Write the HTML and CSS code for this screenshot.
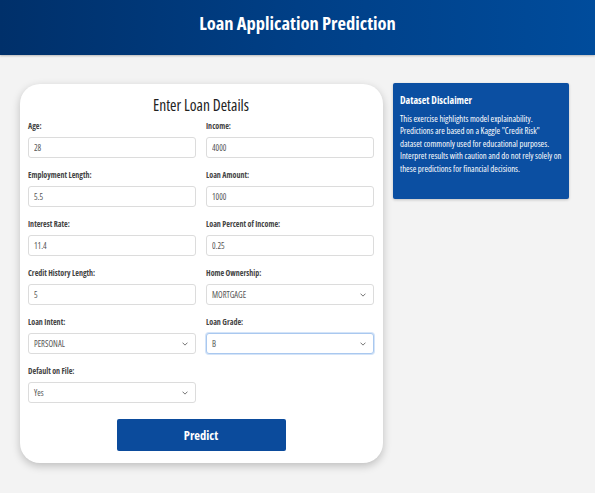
FILE: index.html
```html
<!DOCTYPE html>
<html lang="en">
<head>
<meta charset="utf-8">
<title>Loan Application Prediction</title>
<link rel="stylesheet" href="styles.css">
</head>
<body>
<header class="topbar">
  <h1 class="topbar-title">Loan Application Prediction</h1>
</header>
<main class="content">
  <form class="card">
    <h2 class="card-title">Enter Loan Details</h2>
    <div class="fields">
      <div class="field">
        <label class="field-label">Age:</label>
        <input class="field-input" type="text" value="28">
      </div>
      <div class="field">
        <label class="field-label">Income:</label>
        <input class="field-input" type="text" value="4000">
      </div>
      <div class="field">
        <label class="field-label">Employment Length:</label>
        <input class="field-input" type="text" value="5.5">
      </div>
      <div class="field">
        <label class="field-label">Loan Amount:</label>
        <input class="field-input" type="text" value="1000">
      </div>
      <div class="field">
        <label class="field-label">Interest Rate:</label>
        <input class="field-input" type="text" value="11.4">
      </div>
      <div class="field">
        <label class="field-label">Loan Percent of Income:</label>
        <input class="field-input" type="text" value="0.25">
      </div>
      <div class="field">
        <label class="field-label">Credit History Length:</label>
        <input class="field-input" type="text" value="5">
      </div>
      <div class="field">
        <label class="field-label">Home Ownership:</label>
        <div class="select-wrap">
          <div class="field-input select">MORTGAGE</div>
          <svg class="chevron" viewBox="0 0 8 5" width="6" height="4"><path d="M0.7 0.7 L4 4 L7.3 0.7" fill="none" stroke="#666" stroke-width="1.2"/></svg>
        </div>
      </div>
      <div class="field">
        <label class="field-label">Loan Intent:</label>
        <div class="select-wrap">
          <div class="field-input select">PERSONAL</div>
          <svg class="chevron" viewBox="0 0 8 5" width="6" height="4"><path d="M0.7 0.7 L4 4 L7.3 0.7" fill="none" stroke="#666" stroke-width="1.2"/></svg>
        </div>
      </div>
      <div class="field">
        <label class="field-label">Loan Grade:</label>
        <div class="select-wrap">
          <div class="field-input select focused">B</div>
          <svg class="chevron" viewBox="0 0 8 5" width="6" height="4"><path d="M0.7 0.7 L4 4 L7.3 0.7" fill="none" stroke="#666" stroke-width="1.2"/></svg>
        </div>
      </div>
      <div class="field">
        <label class="field-label">Default on File:</label>
        <div class="select-wrap">
          <div class="field-input select">Yes</div>
          <svg class="chevron" viewBox="0 0 8 5" width="6" height="4"><path d="M0.7 0.7 L4 4 L7.3 0.7" fill="none" stroke="#666" stroke-width="1.2"/></svg>
        </div>
      </div>
    </div>
    <div class="actions">
      <button class="predict-btn" type="button">Predict</button>
    </div>
  </form>
  <aside class="disclaimer">
    <h3 class="disclaimer-title">Dataset Disclaimer</h3>
    <p class="disclaimer-text">This exercise highlights model explainability.<br>Predictions are based on a Kaggle "Credit Risk"<br>dataset commonly used for educational purposes.<br>Interpret results with caution and do not rely solely on<br>these predictions for financial decisions.</p>
  </aside>
</main>
</body>
</html>
```
FILE: styles.css
```css
* { box-sizing: border-box; }

html, body {
  margin: 0;
  padding: 0;
}

body {
  background: #f3f3f3;
  font-family: "Open Sans", "Lato", sans-serif;
  font-stretch: 75%;
  color: #333;
  width: 595px;
  height: 493px;
  overflow: hidden;
}

.topbar {
  height: 55px;
  background: linear-gradient(90deg, #00306a 0%, #003f86 50%, #004c9c 100%);
  display: flex;
  align-items: center;
  justify-content: center;
  box-shadow: 0 1px 2px rgba(0, 0, 0, 0.25);
}

.topbar-title {
  margin: 0;
  margin-top: -10px;
  color: #fff;
  font-size: 18.5px;
  font-weight: 700;
}

.content {
  display: flex;
  align-items: flex-start;
  gap: 10px;
  padding: 28px 0 0 20px;
}

.card {
  width: 363px;
  background: #fff;
  border-radius: 20px;
  box-shadow: 0 3px 8px rgba(0, 0, 0, 0.22);
  padding: 11px 9px 12px 8px;
  margin: 1px 0 0 0;
}

.card-title {
  margin: 0 0 5px 0;
  text-align: center;
  font-size: 15.5px;
  line-height: 20px;
  font-weight: 400;
  color: #222;
}

.fields {
  display: grid;
  grid-template-columns: 168px 168px;
  column-gap: 10px;
  row-gap: 11px;
}

.field {
  display: flex;
  flex-direction: column;
  gap: 5px;
}

.field-label {
  font-size: 8px;
  line-height: 12px;
  font-weight: 700;
  color: #444;
}

.field-input {
  display: block;
  width: 100%;
  height: 21px;
  border: 1px solid #dcdcdc;
  border-radius: 3px;
  background: #fff;
  padding: 0 5px;
  font-family: inherit;
  font-stretch: inherit;
  font-size: 8.5px;
  line-height: 19px;
  color: #555;
  outline: none;
}

.select-wrap {
  position: relative;
}

.select.focused {
  border-color: #a9c8ef;
  box-shadow: 0 0 0 1px #d4e4f8;
}

.chevron {
  position: absolute;
  right: 8px;
  top: 9px;
}

.actions {
  display: flex;
  justify-content: center;
  margin-top: 16px;
}

.predict-btn {
  width: 169px;
  height: 32px;
  background: #0b4b9c;
  color: #fff;
  border: none;
  border-radius: 2px;
  font-family: inherit;
  font-stretch: inherit;
  font-size: 12.5px;
  font-weight: 700;
}

.disclaimer {
  width: 176px;
  background: #0b4fa2;
  color: #fff;
  border-radius: 2px;
  padding: 10px 2px 24px 7px;
  box-shadow: 0 1px 3px rgba(0, 0, 0, 0.2);
}

.disclaimer-title {
  margin: 0 0 6px 0;
  font-size: 10px;
  line-height: 14px;
  font-weight: 700;
}

.disclaimer-text {
  margin: 0;
  font-size: 8.7px;
  line-height: 12.4px;
  white-space: nowrap;
}
```
